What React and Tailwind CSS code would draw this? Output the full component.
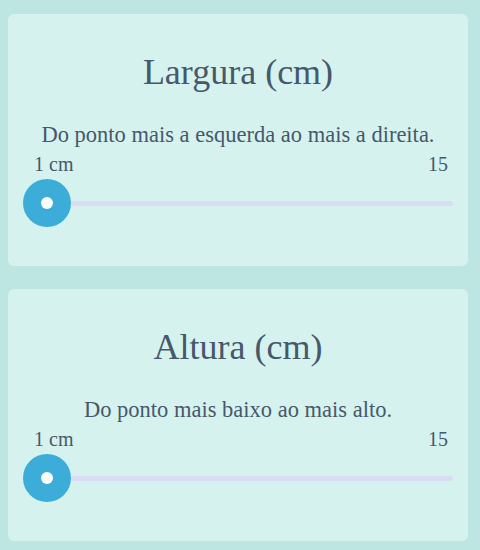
export default function App() {
  const sections = [
    { title: 'Largura (cm)', hint: 'Do ponto mais a esquerda ao mais a direita.' },
    { title: 'Altura (cm)', hint: 'Do ponto mais baixo ao mais alto.' },
  ];

  return (
    <div
      className="w-[480px] h-[550px] bg-[#bde6e2] pt-[14px] pl-2 pr-3 flex flex-col gap-[23px] text-[#46586a]"
      style={{ fontFamily: '"Liberation Serif", "Times New Roman", serif' }}
    >
      {sections.map((s) => (
        <div key={s.title} className="h-[252px] bg-[#d6f2ef] rounded-md flex flex-col items-center">
          <h2 className="mt-[36px] text-[36px] leading-[44px]">{s.title}</h2>
          <p className="mt-[27px] text-[22.5px] leading-[28px]">{s.hint}</p>
          <div className="w-full pl-[26px] pr-[20px] mt-[2px] flex justify-between text-[20px] leading-[26px]">
            <span>1 cm</span>
            <span>15</span>
          </div>
          {/* slider */}
          <div className="w-full pl-[15px] pr-[15px] mt-[2px] flex items-center">
            <div className="w-12 h-12 rounded-full bg-[#3badd8] flex items-center justify-center shrink-0">
              <div className="w-3 h-3 rounded-full bg-white" />
            </div>
            <div className="flex-1 h-[5px] rounded-full bg-[#d9dcf2]" />
          </div>
        </div>
      ))}
    </div>
  );
}
